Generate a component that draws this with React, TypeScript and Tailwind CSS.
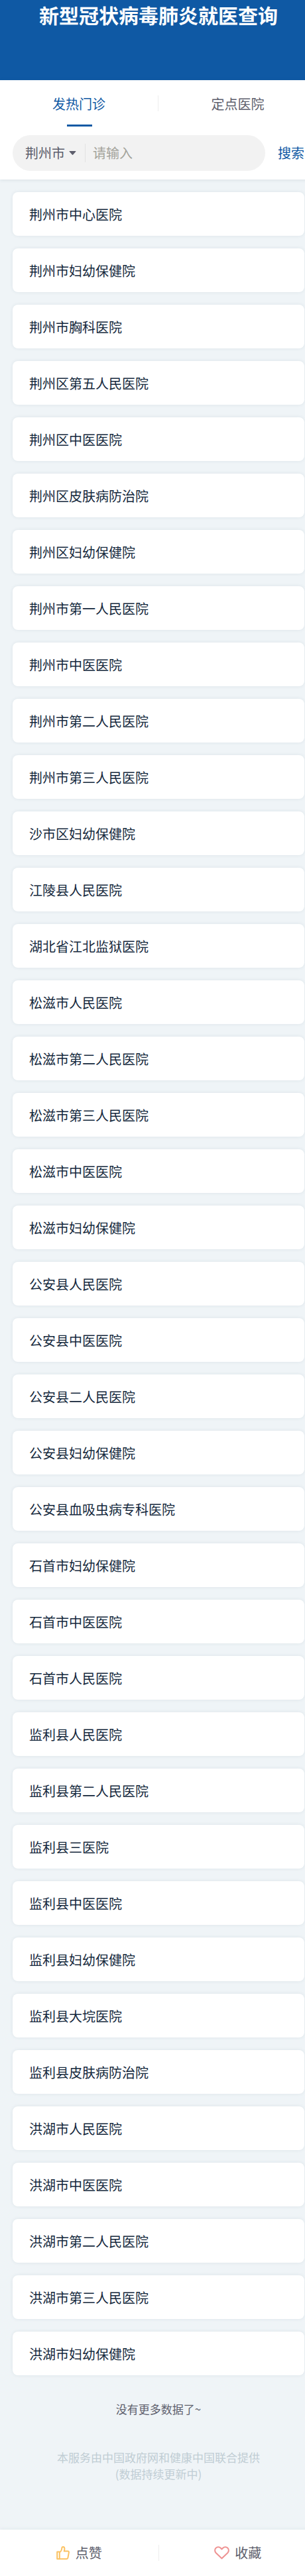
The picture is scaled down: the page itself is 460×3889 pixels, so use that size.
import { useState } from "react";

const hospitals = [
  "荆州市中心医院",
  "荆州市妇幼保健院",
  "荆州市胸科医院",
  "荆州区第五人民医院",
  "荆州区中医医院",
  "荆州区皮肤病防治院",
  "荆州区妇幼保健院",
  "荆州市第一人民医院",
  "荆州市中医医院",
  "荆州市第二人民医院",
  "荆州市第三人民医院",
  "沙市区妇幼保健院",
  "江陵县人民医院",
  "湖北省江北监狱医院",
  "松滋市人民医院",
  "松滋市第二人民医院",
  "松滋市第三人民医院",
  "松滋市中医医院",
  "松滋市妇幼保健院",
  "公安县人民医院",
  "公安县中医医院",
  "公安县二人民医院",
  "公安县妇幼保健院",
  "公安县血吸虫病专科医院",
  "石首市妇幼保健院",
  "石首市中医医院",
  "石首市人民医院",
  "监利县人民医院",
  "监利县第二人民医院",
  "监利县三医院",
  "监利县中医医院",
  "监利县妇幼保健院",
  "监利县大垸医院",
  "监利县皮肤病防治院",
  "洪湖市人民医院",
  "洪湖市中医医院",
  "洪湖市第二人民医院",
  "洪湖市第三人民医院",
  "洪湖市妇幼保健院",
];

const tabs = ["发热门诊", "定点医院"];

function ThumbIcon() {
  return (
    <svg width="20" height="21" viewBox="0 0 20 21" fill="none" stroke="#fbc263" strokeWidth="2" strokeLinejoin="round" aria-hidden="true">
      <path d="M1.2 8.6h3.6v10.6H1.2z" />
      <path d="M4.8 9.2c2.500-1.100 3.200-3.400 3.500-6.200.1-1.200.8-1.900 1.800-1.900 1.500 0 2.300 1.200 2.300 2.800 0 1.300-.4 2.600-.7 3.700h5.700c1 0 1.700.8 1.500 1.800l-1.500 8.200c-.2 1-.9 1.600-1.900 1.600H4.800" />
    </svg>
  );
}

function HeartIcon() {
  return (
    <svg width="23" height="20" viewBox="0 0 23 20" fill="none" stroke="#ee9292" strokeWidth="2" strokeLinejoin="round" aria-hidden="true">
      <path d="M11.500 18.500 2.800 10.200C.6 8 .6 4.700 2.600 2.700c2-2 5.200-2 7.200 0l1.700 1.800 1.700-1.800c2-2 5.200-2 7.200 0 2 2 2 5.300-.2 7.500z" />
    </svg>
  );
}

export default function App() {
  const [active, setActive] = useState(0);

  return (
    <div className="w-full overflow-x-clip font-['Noto_Sans_CJK_SC','Noto_Sans',sans-serif]">
      <div className="min-w-[478px] bg-[#eff4f7] text-xl leading-[30px] text-[#5d5e6c]">
        <header className="h-[121px] bg-[#0f59a4]">
          <h1 className="text-center text-3xl leading-[44px] font-bold text-white">新型冠状病毒肺炎就医查询</h1>
        </header>

        <section className="bg-white pb-[13px] shadow-[0_1px_5px_rgba(60,90,110,0.12)]">
          <div className="flex items-start pb-[13px]" role="tablist">
            {tabs.map((tab, i) => (
              <button
                key={tab}
                type="button"
                role="tab"
                aria-selected={active === i}
                onClick={() => setActive(i)}
                className={
                  active === i
                    ? "group flex flex-1 flex-col items-center pt-[23px] text-[#0f59a4]"
                    : "group flex flex-1 flex-col items-center pt-[23px]"
                }
              >
                <span className="h-6 w-full border-r border-[#ededed] leading-[26px] group-last:border-r-0">{tab}</span>
                <span className={active === i ? "mt-5 h-[3px] w-[38px] bg-[#0f59a4]" : "mt-5 h-[3px] w-[38px]"} />
              </button>
            ))}
          </div>

          <form className="flex items-center pl-[19px]" onSubmit={(e) => e.preventDefault()}>
            <div className="flex h-[54px] flex-1 items-center rounded-full bg-[#f2f2f2] pl-[19px]">
              <div className="flex h-7 items-center border-r border-[#e2e2e2] pr-[13px]">
                <select aria-label="城市" className="w-[60px] appearance-none bg-transparent">
                  <option>荆州市</option>
                </select>
                <svg className="ml-1.5" width="11" height="8" viewBox="0 0 11 8" fill="#5d5e6c" aria-hidden="true">
                  <path d="M1.200 1h8.600c.6 0 .8.500.4.900L6.200 6.600c-.4.500-1 .5-1.400 0L.8 1.900C.4 1.500.6 1 1.200 1z" />
                </svg>
              </div>
              <input
                aria-label="医院名称"
                placeholder="请输入"
                className="ml-[11px] min-w-0 flex-1 bg-transparent outline-none placeholder:text-[#a3a39b]"
              />
            </div>
            <button type="submit" className="w-[78px] text-[#0f59a4]">
              搜索
            </button>
          </form>
        </section>

        <main className="px-[19px] pt-[19px]">
          <ul className="flex flex-col gap-[19px]">
            {hospitals.map((name) => (
              <li key={name} className="rounded-lg bg-white px-[25px] pt-[19px] pb-[17px] text-[#14283c] shadow-[0_0_5px_rgba(60,90,110,0.1)]">
                {name}
              </li>
            ))}
          </ul>
          <p className="pt-[38px] text-center text-[17px] leading-[26px]">没有更多数据了~</p>
          <p className="pt-[47px] pb-[72px] text-center text-[17px] leading-[25px] text-[#c0cdd4]">
            本服务由中国政府网和健康中国联合提供
            <br />
            (数据持续更新中)
          </p>
        </main>

        <footer className="flex items-center bg-white py-[23px] shadow-[0_-1px_5px_rgba(60,90,110,0.08)]">
          <button type="button" className="flex h-6 flex-1 items-center justify-center gap-[9px] border-r border-[#ededed]">
            <ThumbIcon />
            点赞
          </button>
          <button type="button" className="flex h-6 flex-1 items-center justify-center gap-2">
            <HeartIcon />
            收藏
          </button>
        </footer>
      </div>
    </div>
  );
}
